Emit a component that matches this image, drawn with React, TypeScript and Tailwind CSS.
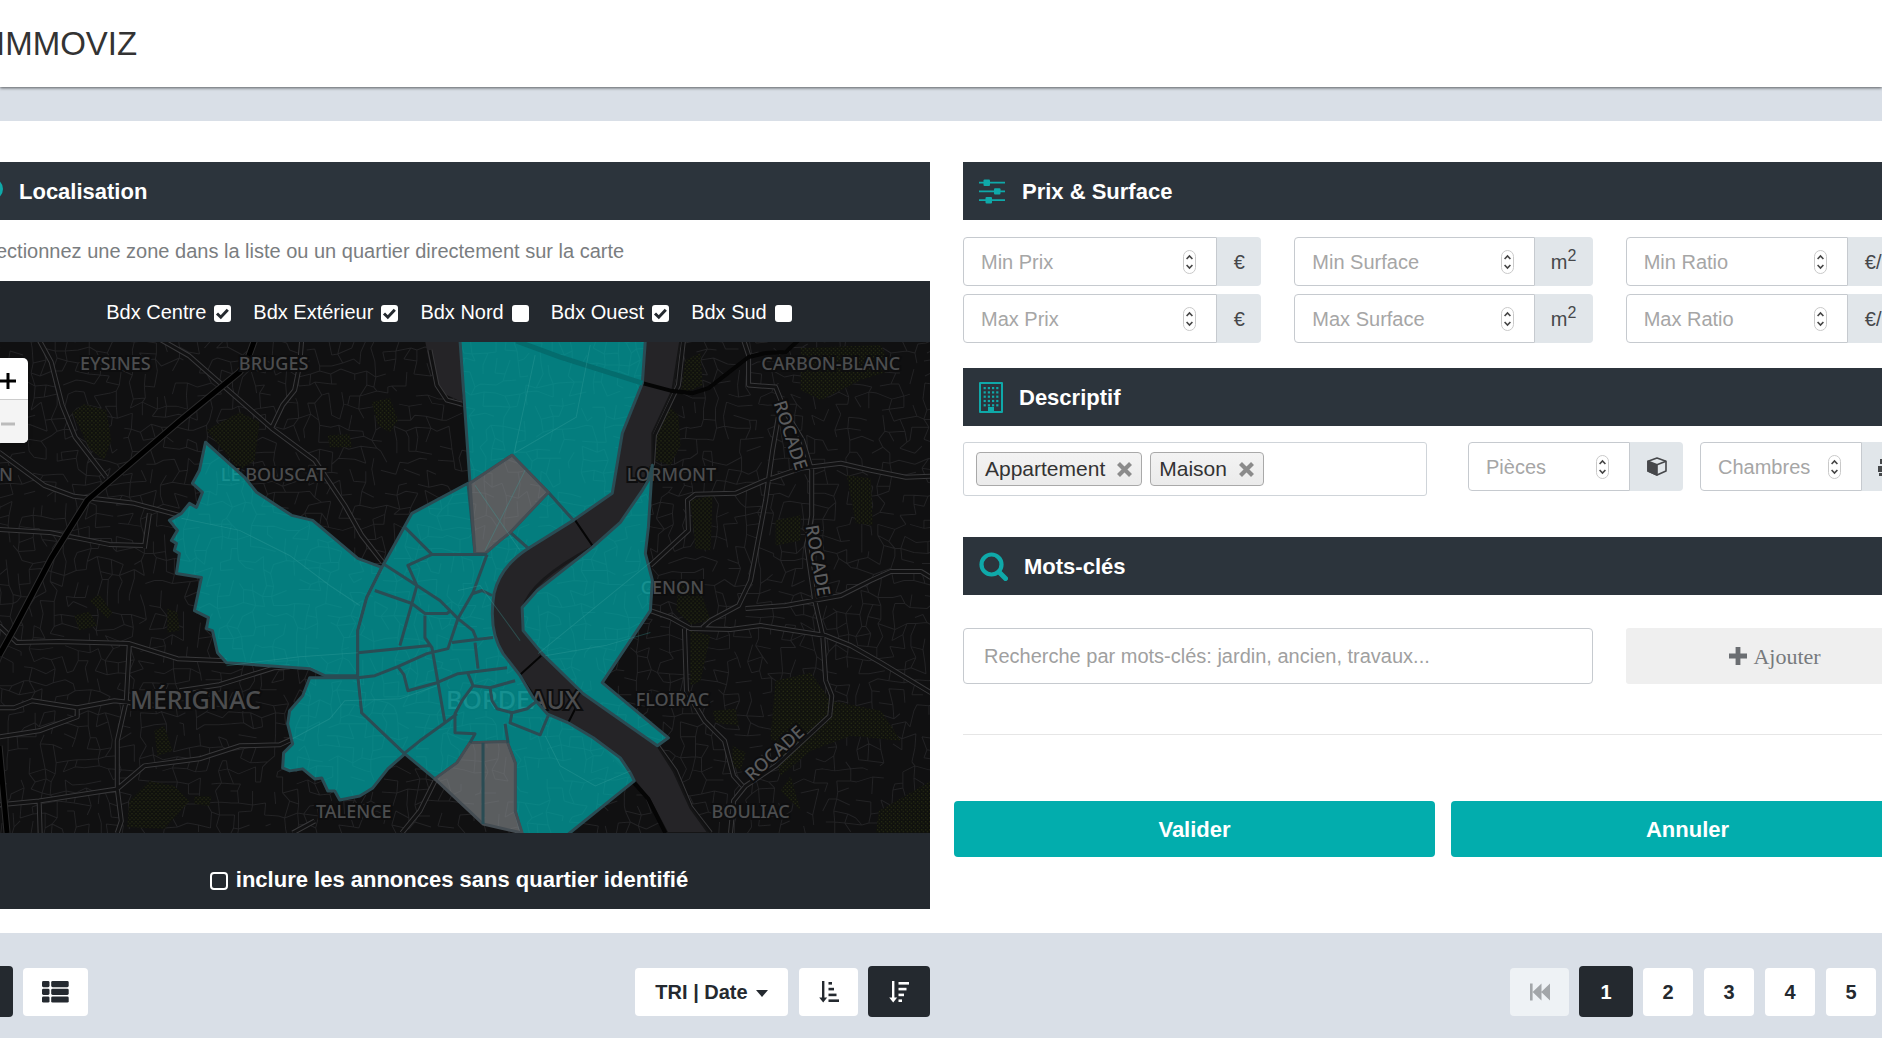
import type { ReactNode } from 'react';

/* ---------- icons ---------- */

const SlidersIcon = () => (
  <svg className="h-[25px] w-[26px]" viewBox="0 0 26 25" fill="#0fa9a9">
    <path d="M0 2.7h26v1.8H0zM0 11.5h26v1.8H0zM0 20.3h26v1.8H0z" />
    <rect x="4.5" y="0.5" width="6.5" height="6.4" rx="1" />
    <rect x="15" y="9.2" width="6.5" height="6.4" rx="1" />
    <rect x="6.5" y="18" width="6.5" height="6.4" rx="1" />
  </svg>
);

const BuildingIcon = () => (
  <svg className="h-[31px] w-6" viewBox="0 0 24 31" fill="#0fa9a9">
    <path fillRule="evenodd" d="M1 0h22a1 1 0 0 1 1 1v29a1 1 0 0 1-1 1H1a1 1 0 0 1-1-1V1a1 1 0 0 1 1-1zM2 2v27h7v-4h6v4h7V2z" />
    {[5, 9.3, 13.6, 17.9, 22.2].map((y) =>
      [4.6, 8.8, 13, 17.2].map((x) => <rect key={`${x}-${y}`} x={x} y={y} width="2.2" height="2.2" />),
    )}
  </svg>
);

const SearchIcon = () => (
  <svg className="h-[29px] w-[29px]" viewBox="0 0 29 29" fill="none" stroke="#0fa9a9">
    <circle cx="12.5" cy="12.5" r="10" strokeWidth="4.2" />
    <path d="M20 20l6.5 6.5" strokeWidth="5" strokeLinecap="round" />
  </svg>
);

const CrossIcon = () => (
  <svg className="h-[15px] w-[15px]" viewBox="0 0 15 15" stroke="#8b8b8b" strokeWidth="4.2">
    <path d="M1.5 1.5l12 12M13.5 1.5l-12 12" />
  </svg>
);

const CubeIcon = () => (
  <svg className="h-[19px] w-5" viewBox="0 0 20 19" stroke="#46484b" strokeWidth="1.6" strokeLinejoin="round">
    <path d="M10 1L19 4.2V14L10 18L1 14V4.2z" fill="#e1e6ea" />
    <path d="M1 4.2L10 7.8V18L1 14z" fill="#46484b" />
    <path d="M10 7.8L19 4.2" fill="none" />
  </svg>
);

const BedIcon = () => (
  <svg className="h-5 w-[22px]" viewBox="0 0 22 20" fill="#46484b">
    <path d="M2 2h7v5H2zM13 2h7v5h-7zM0 9h22v6H0zM1 16h3v3H1zM18 16h3v3h-3z" />
  </svg>
);

const ListIcon = () => (
  <svg className="h-[22px] w-[27px]" viewBox="0 0 27 22" fill="#24292f">
    {[0, 7.7, 15.4].map((y) => (
      <g key={y}>
        <rect y={y} width="7.5" height="6.2" rx="1.4" />
        <rect x="9.2" y={y} width="17.5" height="6.2" rx="1.4" />
      </g>
    ))}
  </svg>
);

const SortIcon = ({ widths, color }: { widths: number[]; color: string }) => (
  <svg className="h-[22px] w-5" viewBox="0 0 20 22" fill={color}>
    <path d="M3 0h2.4v16.5H8.2L4.2 21.5.2 16.5H3z" />
    {widths.map((w, i) => (
      <rect key={i} x="9.5" y={1 + i * 5.8} width={w} height="2.6" />
    ))}
  </svg>
);

const FirstIcon = () => (
  <svg className="h-[18px] w-5" viewBox="0 0 20 18" fill="#a2a6a9">
    <path d="M0 .5h2.6v17H0zM11.5 .5v17L2.6 9zM20 .5v17L11.2 9z" />
  </svg>
);

const PlusIcon = () => (
  <svg className="h-[18px] w-[18px]" viewBox="0 0 18 18" fill="#6b6e72">
    <path d="M6.6 0h4.8v6.6H18v4.8h-6.6V18H6.6v-6.6H0V6.6h6.6z" />
  </svg>
);

/* ---------- map ---------- */

function streetGrid() {
  let seed = 7;
  const rnd = () => {
    seed = (seed * 16807) % 2147483647;
    return seed / 2147483647;
  };
  const step = 11;
  const cols = 86;
  const rows = 46;
  const pts: [number, number][][] = [];
  for (let r = 0; r < rows; r++) {
    pts.push([]);
    for (let c = 0; c < cols; c++) {
      pts[r].push([Math.round(c * step + (rnd() - 0.5) * 8), Math.round(340 + r * step + (rnd() - 0.5) * 8)]);
    }
  }
  let d = '';
  for (let r = 0; r < rows - 1; r++) {
    for (let c = 0; c < cols - 1; c++) {
      const [x, y] = pts[r][c];
      if (rnd() < 0.55) d += `M${x} ${y}L${pts[r][c + 1].join(' ')}`;
      if (rnd() < 0.55) d += `M${x} ${y}L${pts[r + 1][c].join(' ')}`;
    }
  }
  return d;
}

const STREETS = streetGrid();

const ROADS =
  'M40 340L52 362L63 405L76 437L107 477M162 340L190 356L215 378L272 428L315 460L345 505L362 535L383 562M302 340L300 365L295 390L283 405L272 428' +
  'M0 452L45 485L75 496L135 503L180 515M0 529L50 532L110 544L145 545M150 513L145 548M0 625L18 642L60 641L130 643L178 658L227 660' +
  'M130 643L127 700L118 740L118 788L122 820L118 832M0 707L15 707L33 700L78 707L115 700L160 705M78 707L78 716L40 730L0 736M0 804L40 800L118 788L145 765L200 758L240 745L280 744L293 738' +
  'M180 690L220 684L275 667L290 666M40 800L41 832M315 820L293 832M435 780L420 810L402 832M430 350L437 385L447 400L462 404' +
  'M743 340L748 355L748 385L775 387L785 412L802 440L811 470L811 515L806 545L814 600L822 635L825 680L831 695L829 715L815 728L775 765L745 785L733 800L730 832' +
  'M778 415L772 450L765 500L750 580L738 605L710 620L702 627M650 565L688 530L687 500L695 494L735 493L765 480L800 468L840 463L870 470L905 477L930 476' +
  'M745 608L785 605L840 595L870 580L890 571L920 571L930 577M650 610L670 617L690 628L730 629L760 625L825 635L850 645L880 662L930 692' +
  'M684 628L686 690L704 720L724 740L733 775L742 785M683 340L678 385L654 435L652 465M657 745L675 770L690 806L710 832';

const HIGHWAYS = 'M255 340L247 362L240 372L180 421L88 500L52 558L14 630L0 655M0 745L8 832';
const BRIDGES = 'M642 383L672 391L692 393L708 388L726 374L748 357L765 353L785 352L798 340M632 780L648 798L665 832';
const RIVER =
  'M645 340L642 383L622 433L612 493L573 520L528 548Q500 566 494 593Q488 630 503 653L520 675L547 713L568 722L593 737L632 777L650 800L667 832H708L690 807L673 770L657 745L583 693L542 653L523 630L522 607L537 590L592 547L620 522L642 490L652 465V433L672 390L680 340z';

const PARKS =
  'M73 412L85 404L107 410L112 440L105 460L90 448zM207 430L240 412L260 422L255 460L240 470zM372 402L390 398L398 420L390 432L378 425zM328 435L350 434L352 447L330 447z' +
  'M90 600L100 594L113 612L108 618zM75 615L90 611L98 625L80 630zM168 608L178 612L180 630L168 632zM155 730L165 725L173 750L158 755zM130 800L150 780L175 785L190 800L165 828L128 826zM195 795L212 795L210 805L195 803z' +
  'M655 435L668 405L678 415L680 445L670 465L655 460zM685 360L700 353L702 385L680 395zM690 500L712 495L710 550L695 548zM678 580L700 590L710 620L690 624L676 610z' +
  'M846 475L870 478L872 525L855 523zM775 520L800 515L800 540L775 545zM800 348L880 345L892 370L860 380L820 400L800 390zM690 630L710 635L700 680L690 685z' +
  'M775 680L810 672L830 700L880 710L900 740L850 735L810 750L780 775L770 735zM712 710L735 708L738 725L715 722zM732 745L745 752L740 770L732 765zM878 810L930 780V832H875zM790 775L800 810L780 790z';

const TEAL_ZONES = [
  'M206 442L245 477L257 492L292 515L313 520L358 558L382 567L367 597L358 630V675H325L310 668L227 662L218 652L213 630L207 628L209 617L195 610L202 577L177 573L180 553L175 550L177 543L172 540L178 530L170 520L182 513L190 503L197 507L203 492L193 483L200 470z',
  'M310 677H359L362 712L405 753L388 768L373 787L360 795L340 799L335 790L328 790L322 777L315 778L303 768L290 770L283 767L284 752L293 743L288 723L290 710L303 695z',
  'M460 340L470 483L512 455L548 492L573 520L612 493L622 433L642 383L645 340z',
  'M548 492L573 520L528 548L510 532z',
  'M652 465L648 527L645 553L652 580L650 610L602 682L668 737L657 745L583 693L542 653L523 630L522 607L537 590L592 547L620 522L642 490L648 480z',
  'M468 483L412 513L382 567L367 597L358 630V675L362 712L405 753L435 778L457 762L470 742L507 741L515 762V810L522 834H567L634 780L630 772L620 757L593 737L568 722L547 713L533 697L520 675L503 653Q488 630 494 593Q500 566 528 548L510 532L500 540L485 553H475z',
];

const GREY_ZONES = [
  'M470 483L512 455L548 492L510 532L500 540L485 553H475z',
  'M435 778L457 762L470 742L507 741L515 762V810L522 832L483 823z',
];

const BORDERS =
  'M405 527L432 554H487M432 554L408 565L417 585M383 563L417 585L440 600L458 618L473 630L477 640M487 554L473 592L458 618L448 648L427 653L398 666L375 675L358 677' +
  'M375 590L412 603L425 613H447L451 610M417 585L410 610L400 645M358 652L430 645M425 615V637L432 647L445 722M452 642L493 637M475 642L478 668M398 666L404 674L408 690L437 682L458 673L507 667' +
  'M473 593L482 590L492 595M468 673L473 685L490 687L515 680M473 685L462 700L455 713V732L475 733L470 742M405 752L420 740L445 722L457 713M490 687L492 700L497 708L512 712L527 708L537 700M512 712L510 722L540 734L548 715M505 723L508 742M483 742V823';

const LABELS = [
  { t: 'EYSINES', x: 116, y: 370 },
  { t: 'BRUGES', x: 274, y: 370 },
  { t: 'CARBON-BLANC', x: 830, y: 370 },
  { t: 'LE BOUSCAT', x: 274, y: 481 },
  { t: 'LORMONT', x: 671, y: 481 },
  { t: 'CENON', x: 672, y: 593 },
  { t: 'FLOIRAC', x: 672, y: 705 },
  { t: 'TALENCE', x: 354, y: 817 },
  { t: 'BOULIAC', x: 750, y: 817 },
];

const CityMap = () => (
  <svg
    className="block h-[491px] w-full bg-[#101011]"
    viewBox="0 342 930 490"
    preserveAspectRatio="xMidYMid slice"
    role="img"
    aria-label="Carte des quartiers de Bordeaux"
  >
    <defs>
      <pattern id="dots" width="4" height="4" patternUnits="userSpaceOnUse">
        <rect width="4" height="4" fill="#0f100d" />
        <rect width="1.3" height="1.3" fill="#262b13" />
        <rect x="2" y="2" width="1.3" height="1.3" fill="#262b13" />
      </pattern>
    </defs>
    <path d={STREETS} stroke="#232325" fill="none" />
    <path d={PARKS} fill="url(#dots)" />
    <path d="M425 340L430 365L440 392L462 402V340z" fill="#252427" />
    <g fill="none" strokeLinejoin="round">
      <path d={ROADS} stroke="#39393b" strokeWidth="5" />
      <path d={ROADS} stroke="#111112" strokeWidth="3" />
      <path d={HIGHWAYS} stroke="#2c2c2d" strokeWidth="7" />
      <path d={HIGHWAYS} stroke="#000" strokeWidth="5" />
    </g>
    <path d={RIVER} fill="#252427" stroke="#151516" strokeWidth="2" />
    <g fill="none" stroke="#050505">
      <path d={BRIDGES} strokeWidth="4" />
      <path d="M575 520L592 545M520 674L541 655M568 722L576 706" strokeWidth="2" />
      <path d="M523 608Q530 580 592 547" strokeWidth="3" stroke="#18181a" />
    </g>
    <g
      fontFamily="'Noto Sans', 'Open Sans', sans-serif"
      fontSize="18"
      fontWeight="500"
      textAnchor="middle"
      fill="#4c4d4f"
      stroke="#0d0d0e"
      strokeWidth="4"
      paintOrder="stroke"
    >
      {LABELS.map((l) => (
        <text key={l.t} x={l.x} y={l.y}>
          {l.t}
        </text>
      ))}
      <text x="0" y="481" textAnchor="start">
        N
      </text>
      <g fontSize="25">
        <text x="196" y="708">MÉRIGNAC</text>
        <text x="513" y="708">BORDEAUX</text>
      </g>
      <g fill="#5a5b5d">
        <text transform="translate(784 437) rotate(72)">ROCADE</text>
        <text transform="translate(811 561) rotate(80)">ROCADE</text>
        <text transform="translate(778 757) rotate(-42)">ROCADE</text>
      </g>
    </g>
    <g stroke="#2a4c54" strokeWidth="3" strokeLinejoin="round">
      <g fill="#00adad" fillOpacity="0.7">
        {TEAL_ZONES.map((d) => (
          <path key={d} d={d} />
        ))}
      </g>
      <g fill="#83878a" fillOpacity="0.65" stroke="#454d53">
        {GREY_ZONES.map((d) => (
          <path key={d} d={d} />
        ))}
      </g>
      <path d={BORDERS} fill="none" />
    </g>
    <path d="M516 341L560 357L642 383" stroke="#046c6d" strokeWidth="5" fill="none" />
    <g stroke="#3fa5a3" strokeOpacity="0.3" fill="none">
      <path d="M182 518L240 530L290 555L330 585L360 605M227 665L300 656L358 652M514 453L535 355M514 453L576 417L590 345M538 653L650 562M545 655L605 645L650 632M475 485L520 550M525 470L485 550" />
      <path d="M293 738L330 718L345 700L400 698L437 685M545 735L560 765L595 785L630 770M458 590L480 585L520 640" />
    </g>
  </svg>
);

/* ---------- form pieces ---------- */

const PanelTitle = ({ icon, children, gap }: { icon?: ReactNode; children: ReactNode; gap?: string }) => (
  <h2 className={`flex h-[58px] items-center bg-[#2c343c] px-4 text-[22px] font-bold text-white ${gap ?? 'gap-4'}`}>
    {icon}
    {children}
  </h2>
);

const Spinner = () => (
  <svg className="h-6 w-[13px] shrink-0" viewBox="0 0 13 24" fill="none">
    <rect x="0.5" y="0.5" width="12" height="23" rx="6" fill="#fff" stroke="#c9c9c9" />
    <path d="M3.6 9l2.9-3 2.9 3M3.6 15l2.9 3 2.9-3" stroke="#444" strokeWidth="1.6" />
  </svg>
);

const NumberField = ({ label, unit, addon }: { label: string; unit: ReactNode; addon: string }) => (
  <label className="flex h-[49px] min-w-0">
    <span className="flex min-w-0 flex-1 items-center rounded-l-[4px] border border-[#c6cacf] bg-white pr-5 pl-[17px]">
      <input
        type="number"
        aria-label={label}
        placeholder={label}
        className="w-full min-w-0 flex-1 bg-transparent text-xl text-gray-700 outline-none [appearance:textfield] placeholder:text-[#a6a6a6]"
      />
      <Spinner />
    </span>
    <span className={`flex shrink-0 items-center justify-center rounded-r-[4px] bg-[#e1e6ea] text-xl text-[#46484b] ${addon}`}>
      {unit}
    </span>
  </label>
);

const M2 = () => (
  <span>
    m<sup className="text-base">2</sup>
  </span>
);

const Tag = ({ children }: { children: string }) => (
  <li className="flex h-[34px] items-center gap-3 rounded-[4px] border border-[#a9a9a9] bg-gradient-to-b from-[#f3f3f3] to-[#ebebeb] pr-[9px] pl-2 text-[21px] text-[#333]">
    {children}
    <button type="button" aria-label={`Retirer ${children}`}>
      <CrossIcon />
    </button>
  </li>
);

const ZoneCheck = ({ label, checked }: { label: string; checked?: boolean }) => (
  <label className="flex items-center gap-2">
    {label}
    <span className="relative mt-1 flex">
      <input type="checkbox" defaultChecked={checked} className="peer h-[17px] w-[17px] appearance-none rounded-[3px] bg-white" />
      <svg
        className="pointer-events-none absolute inset-0 hidden h-[17px] w-[17px] peer-checked:block"
        viewBox="0 0 17 17"
        fill="none"
        stroke="#24292f"
        strokeWidth="3"
      >
        <path d="M3 8.5l3.8 3.7 7-7.4" />
      </svg>
    </span>
  </label>
);

const btn = 'flex items-center justify-center rounded-[4px] text-xl font-bold';

export default function App() {
  return (
    <div className="flex min-h-screen flex-col overflow-hidden bg-[#d9dfe7] font-['Liberation_Sans',Arial,sans-serif]">
      <header className="relative flex h-[87px] items-center bg-white shadow-[0_1px_3px_rgba(0,0,0,0.6)]">
        <h1 className="-ml-1 text-[33px] text-[#333]">IMMOVIZ</h1>
      </header>

      <main className="mt-[34px] bg-white pt-[41px] pb-6">
        <div className="-mr-[42px] grid grid-cols-[930fr_961fr] items-start gap-[33px]">
          <section className="min-w-0">
            <div className="relative">
              <PanelTitle>
                <span className="pl-[3px]">Localisation</span>
              </PanelTitle>
              <span className="absolute top-4 -left-[19px] h-[22px] w-[22px] rounded-full bg-[#0fa9a9]" />
            </div>
            <p className="-ml-1 flex h-[61px] items-center text-xl text-[#7a7d80]">
              ectionnez une zone dans la liste ou un quartier directement sur la carte
            </p>
            <div className="flex h-[61px] items-center justify-center gap-[22px] bg-[#24292f] pr-8 text-xl text-white">
              <ZoneCheck label="Bdx Centre" checked />
              <ZoneCheck label="Bdx Extérieur" checked />
              <ZoneCheck label="Bdx Nord" />
              <ZoneCheck label="Bdx Ouest" checked />
              <ZoneCheck label="Bdx Sud" />
            </div>
            <div className="relative">
              <CityMap />
              <div className="absolute top-4 -left-3 w-10 overflow-hidden rounded-[5px] bg-white shadow-md">
                <button type="button" aria-label="Zoom avant" className="flex h-[42px] w-full items-center justify-center border-b border-[#ccc] pt-1">
                  <svg className="h-[18px] w-[18px]" viewBox="0 0 18 18" stroke="#000" strokeWidth="3">
                    <path d="M9 1v16M1 9h16" />
                  </svg>
                </button>
                <button type="button" aria-label="Zoom arrière" className="flex h-[43px] w-full items-center justify-center bg-[#f4f4f4] pt-1">
                  <svg className="h-[18px] w-[14px]" viewBox="0 0 14 18" stroke="#bbb" strokeWidth="3">
                    <path d="M0 9h14" />
                  </svg>
                </button>
              </div>
            </div>
            <div className="flex h-[76px] items-center justify-center bg-[#24292f] pt-4 pr-8">
              <label className="flex items-center gap-2 text-[22px] font-bold text-white">
                <input type="checkbox" className="mt-1 h-[18px] w-[18px] appearance-none rounded-[4px] border-2 border-white" />
                inclure les annonces sans quartier identifié
              </label>
            </div>
          </section>

          <section className="min-w-0">
            <PanelTitle icon={<SlidersIcon />} gap="gap-[17px]">
              Prix &amp; Surface
            </PanelTitle>
            <div className="mt-[17px] grid grid-cols-3 gap-x-[33px] gap-y-2">
              <NumberField label="Min Prix" unit="€" addon="w-11" />
              <NumberField label="Min Surface" unit={<M2 />} addon="w-[58px]" />
              <NumberField label="Min Ratio" unit={<span>€/<M2 /></span>} addon="w-[76px]" />
              <NumberField label="Max Prix" unit="€" addon="w-11" />
              <NumberField label="Max Surface" unit={<M2 />} addon="w-[58px]" />
              <NumberField label="Max Ratio" unit={<span>€/<M2 /></span>} addon="w-[76px]" />
            </div>

            <div className="mt-[25px]">
              <PanelTitle icon={<BuildingIcon />}>Descriptif</PanelTitle>
            </div>
            <div className="mt-4 flex items-start">
              <ul className="mr-[41px] flex h-[54px] flex-1 items-center gap-2 rounded-[3px] border border-[#cfd4d9] px-3">
                <Tag>Appartement</Tag>
                <Tag>Maison</Tag>
              </ul>
              <div className="mr-[17px] w-[215px]">
                <NumberField label="Pièces" unit={<CubeIcon />} addon="w-[53px]" />
              </div>
              <div className="mr-[9px] w-[215px]">
                <NumberField label="Chambres" unit={<BedIcon />} addon="w-[53px]" />
              </div>
            </div>

            <div className="mt-[41px]">
              <PanelTitle icon={<SearchIcon />}>Mots-clés</PanelTitle>
            </div>
            <div className="mt-[33px] grid grid-cols-[630fr_298fr] gap-[33px]">
              <input
                type="text"
                aria-label="Mots-clés"
                placeholder="Recherche par mots-clés: jardin, ancien, travaux..."
                className="h-14 min-w-0 rounded-[4px] border border-[#c6cacf] px-5 text-xl outline-none placeholder:text-[#a0a0a0]"
              />
              <button
                type="button"
                className="flex h-14 items-center justify-center gap-[6px] rounded-[3px] bg-[#efefef] font-['Liberation_Serif',serif] text-[22px] text-[#777a7d]"
              >
                <PlusIcon />
                Ajouter
              </button>
            </div>
            <hr className="mt-[50px] border-[#e6e6e6]" />
            <div className="mt-[66px] -ml-[9px] flex gap-4">
              <button type="button" className="h-14 flex-[481] rounded-[4px] bg-[#02adad] text-[22px] font-bold text-white">
                Valider
              </button>
              <button type="button" className="h-14 flex-[473] rounded-[4px] bg-[#02adad] text-[22px] font-bold text-white">
                Annuler
              </button>
            </div>
          </section>
        </div>
      </main>

      <footer className="-mr-[42px] grid grid-cols-[930fr_961fr] gap-[33px] pt-[33px] pb-[22px] text-[#24292f]">
        <div className="flex items-center">
          <button type="button" aria-label="Vue grille" className="-ml-1 h-[51px] w-[17px] rounded-[4px] bg-[#24292f]" />
          <button type="button" aria-label="Vue liste" className={`${btn} ml-[10px] h-12 w-[65px] bg-white`}>
            <ListIcon />
          </button>
          <button type="button" className={`${btn} ml-auto h-12 w-[153px] gap-2 bg-white`}>
            TRI | Date
            <svg className="mt-1 h-[7px] w-3" viewBox="0 0 12 7" fill="#24292f">
              <path d="M0 0h12L6 7z" />
            </svg>
          </button>
          <button type="button" aria-label="Tri croissant" className={`${btn} ml-[11px] h-12 w-[59px] bg-white`}>
            <SortIcon widths={[3.5, 5.5, 8, 10.5]} color="#24292f" />
          </button>
          <button type="button" aria-label="Tri décroissant" className={`${btn} ml-[10px] h-[51px] w-[62px] bg-[#24292f]`}>
            <SortIcon widths={[10.5, 8, 5.5, 3.5]} color="#fff" />
          </button>
        </div>
        <nav aria-label="Pagination" className="flex items-center justify-end pr-12">
          <button type="button" aria-label="Première page" className={`${btn} h-12 w-[59px] bg-[#eef2f5]`}>
            <FirstIcon />
          </button>
          <button type="button" aria-current="page" className={`${btn} mx-[10px] h-[51px] w-[54px] bg-[#24292f] text-white`}>
            1
          </button>
          <div className="flex gap-[11px]">
            {[2, 3, 4, 5].map((n) => (
              <button key={n} type="button" className={`${btn} h-12 w-[50px] bg-white`}>
                {n}
              </button>
            ))}
          </div>
        </nav>
      </footer>
    </div>
  );
}
